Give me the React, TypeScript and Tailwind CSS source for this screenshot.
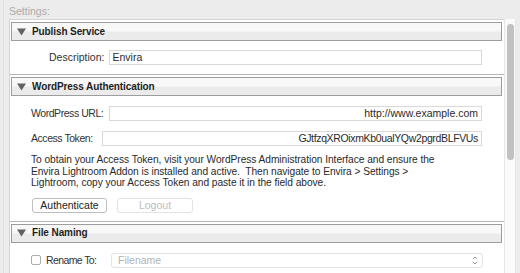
import React from 'react'

function Triangle() {
  return (
    <svg width="9" height="8" viewBox="0 0 9 8" className="shrink-0">
      <polygon points="0,0.5 9,0.5 4.5,7.5" fill="#626262" />
    </svg>
  )
}

function SectionHeader({ title }: { title: string }) {
  return (
    <div className="mt-[2px] ml-[1px] mr-[2px] h-[19px] flex items-center gap-[6px] pl-[5px] border border-[#9d9d9d] bg-linear-to-b from-[#f8f8f8] from-45% to-[#ebebeb] to-55%">
      <Triangle />
      <span className="text-[10px] font-bold tracking-[-0.1px] text-[#1e1e1e]">{title}</span>
    </div>
  )
}

function TextField({ value, align = 'left', tight = false }: { value: string; align?: 'left' | 'right'; tight?: boolean }) {
  return (
    <div
      className={
        align === 'right'
          ? 'flex-1 h-[15px] border border-[#d9d9d9] bg-white flex items-center justify-end pr-[3px] text-[#2a2a2a]'
          : 'flex-1 h-[15px] border border-[#d9d9d9] bg-white flex items-center pl-[2px] text-[#2a2a2a]'
      }
    >
      <span className={tight ? 'tracking-[-0.35px]' : ''}>{value}</span>
    </div>
  )
}

export default function App() {
  return (
    <div
      className="w-[520px] h-[273px] overflow-hidden bg-[#ececec] text-[10.5px] leading-none"
      style={{ fontFamily: '"Liberation Sans", Arial, sans-serif' }}
    >
      <div className="h-full ml-[3px] border-l border-[#e0e0e0] flex flex-col">
        <div className="h-[19px] pl-[5px] pt-[6px] text-[#ababab]">Settings:</div>
        <div className="flex-1 flex min-h-0 ml-[5px]">
          {/* panel */}
          <div className="w-[495px] bg-white border-l border-t border-[#d4d4d4] flex flex-col">
            {/* Publish Service */}
            <div className="border-b border-[#b4b4b4]">
              <SectionHeader title="Publish Service" />
              <div className="flex items-center pl-[39px] pr-[22px] pt-[9px] pb-[9px]">
                <span className="text-[#333] mr-[5px]">Description:</span>
                <TextField value="Envira" />
              </div>
            </div>

            {/* WordPress Authentication */}
            <div className="border-b border-[#b4b4b4]">
              <SectionHeader title="WordPress Authentication" />
              <div className="pl-[21px] pr-[22px] pt-[10px] pb-[8px] text-[#333]">
                <div className="flex items-center">
                  <span className="w-[78px] shrink-0 tracking-[-0.45px] whitespace-nowrap">WordPress URL:</span>
                  <TextField value="http://www.example.com" align="right" />
                </div>
                <div className="flex items-center mt-[10px]">
                  <span className="w-[71px] shrink-0 tracking-[-0.45px] whitespace-nowrap">Access Token:</span>
                  <TextField value="GJtfzqXROixmKb0ualYQw2pgrdBLFVUs" align="right" tight />
                </div>
                <p className="mt-[8px] text-[10.2px] tracking-[-0.05px] leading-[11.5px] text-[#2a2a2a]">
                  To obtain your Access Token, visit your WordPress Administration Interface and ensure the
                  <br />
                  Envira Lightroom Addon is installed and active.&nbsp; Then navigate to Envira &gt; Settings &gt;
                  <br />
                  Lightroom, copy your Access Token and paste it in the field above.
                </p>
                <div className="flex gap-[10px] mt-[9px] pl-[1px]">
                  <button className="w-[75px] h-[15px] rounded-[3px] border border-[#bdbdbd] bg-white text-[#222] flex items-center justify-center">
                    Authenticate
                  </button>
                  <button className="w-[76px] h-[15px] rounded-[3px] border border-[#e2e2e2] bg-white text-[#bdbdbd] flex items-center justify-center">
                    Logout
                  </button>
                </div>
              </div>
            </div>

            {/* File Naming */}
            <div>
              <SectionHeader title="File Naming" />
              <div className="flex items-center pl-[21px] pr-[21px] pt-[10px]">
                <div className="w-[10px] h-[10px] rounded-[2px] border border-[#adadad] bg-white mr-[5px]" />
                <span className="text-[#333] w-[65px] tracking-[-0.6px] whitespace-nowrap">Rename To:</span>
                <div className="flex-1 h-[15px] rounded-[3px] border border-[#e3e3e3] bg-white flex items-center justify-between pl-[6px] pr-[4px] text-[#b3b3b3]">
                  <span>Filename</span>
                  <svg width="6" height="9" viewBox="0 0 6 9">
                    <path d="M0.8 3.2 L3 1 L5.2 3.2 M0.8 5.8 L3 8 L5.2 5.8" fill="none" stroke="#8a8a8a" strokeWidth="0.9" />
                  </svg>
                </div>
              </div>
            </div>
          </div>

          {/* scrollbar */}
          <div className="w-[12px] bg-[#fafafa] border-l border-r border-[#e6e6e6] pt-[5px] flex justify-center">
            <div className="w-[7px] h-[136px] rounded-full bg-[#c1c1c1]" />
          </div>
        </div>
      </div>
    </div>
  )
}
